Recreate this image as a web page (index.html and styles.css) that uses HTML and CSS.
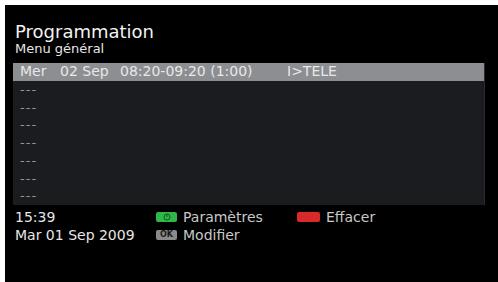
FILE: index.html
```html
<!DOCTYPE html>
<html lang="fr">
  <head>
    <meta charset="UTF-8" />
    <title>Programmation</title>
    <link rel="stylesheet" href="styles.css">
  </head>
  <body>
    <div class="screen">
      <div class="header">
        <h1>Programmation</h1>
        <div class="subtitle">Menu général</div>
      </div>

      <div class="list">
        <div class="row selected">
          <span class="col-day">Mer</span>
          <span class="col-date">02 Sep</span>
          <span class="col-time">08:20-09:20 (1:00)</span>
          <span class="col-channel">I&gt;TELE</span>
        </div>
        <div class="row empty">---</div>
        <div class="row empty">---</div>
        <div class="row empty">---</div>
        <div class="row empty">---</div>
        <div class="row empty">---</div>
        <div class="row empty">---</div>
        <div class="row empty">---</div>
      </div>

      <div class="footer">
        <div class="clock">
          <div>15:39</div>
          <div>Mar 01 Sep 2009</div>
        </div>
        <div class="keys">
          <div class="key">
            <span class="btn btn-green">
              <svg width="8" height="8" viewBox="0 0 8 8">
                <circle cx="4" cy="4" r="3" fill="none" stroke="#0c5a1c" stroke-width="1" />
                <line x1="4" y1="1.5" x2="4" y2="4" stroke="#0c5a1c" stroke-width="1" />
              </svg>
            </span>
            Paramètres
          </div>
          <div class="key">
            <span class="btn btn-red"></span>
            Effacer
          </div>
          <div class="key">
            <span class="btn btn-ok">OK</span>
            Modifier
          </div>
        </div>
      </div>
    </div>
  </body>
</html>
```

FILE: styles.css
```css
/* Basis */
html {
  background-color: #000;
}

body {
  margin: 0;
  font-family: "DejaVu Sans", sans-serif;
  color: #e6e6e6;
}

.screen {
  background-color: #000;
  min-height: 100vh;
  border-top: 5px solid #fff;
  border-left: 5px solid #fff;
  padding: 17px 13px 0 8px;
  box-sizing: border-box;
}

/* Titel */
.header {
  padding-left: 2px;
}

.header h1 {
  margin: 0;
  font-size: 18px;
  font-weight: normal;
  line-height: 20px;
  color: #f2f2f2;
}

.subtitle {
  font-size: 13px;
  line-height: 14px;
}

/* Liste */
.list {
  margin-top: 7px;
  background-color: #1b1c1f;
  border-right: 1px solid #2a2b2e;
}

.row {
  height: 17.75px;
  line-height: 17px;
  padding-left: 7px;
  font-size: 14px;
  color: #e8e8e8;
}

.row.empty {
  font-size: 13px;
  letter-spacing: 1px;
  color: #959595;
}

.row.selected {
  display: flex;
  background-color: #8c8e92;
}

.col-day {
  width: 40px;
}

.col-date {
  width: 60px;
}

.col-time {
  width: 167px;
}

/* Bund */
.footer {
  display: flex;
  padding: 3px 0 0 2px;
  font-size: 14px;
  line-height: 18px;
}

.clock {
  width: 141px;
}

.keys {
  display: grid;
  grid-template-columns: 141px auto;
}

.key {
  display: flex;
  align-items: center;
  gap: 6px;
  color: #c8c8c8;
}

.btn {
  display: inline-flex;
  align-items: center;
  justify-content: center;
  width: 21px;
  height: 10px;
  border-radius: 2px;
}

.btn-green {
  background-color: #2eb84a;
}

.btn-red {
  width: 23px;
  background-color: #d82a2a;
}

.btn-ok {
  background-color: #8a8a8a;
  color: #1a1a1a;
  font-size: 8px;
  font-weight: bold;
  line-height: 10px;
}
```
